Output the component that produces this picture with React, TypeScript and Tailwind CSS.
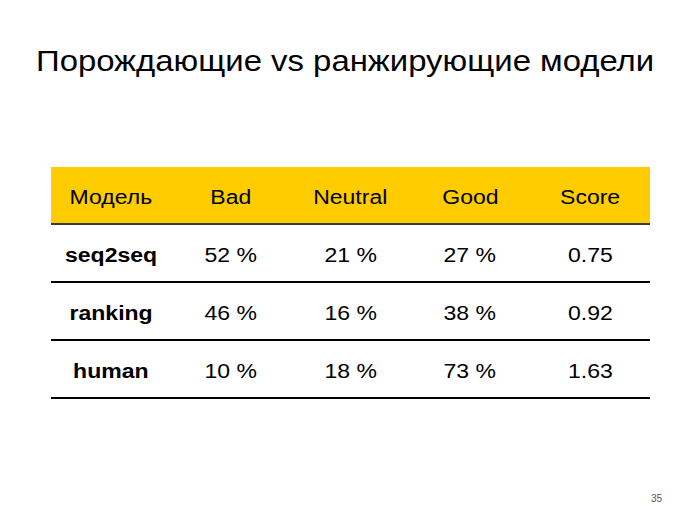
import React from 'react';

const headers = ['Модель', 'Bad', 'Neutral', 'Good', 'Score'];

const rows = [
  ['seq2seq', '52 %', '21 %', '27 %', '0.75'],
  ['ranking', '46 %', '16 %', '38 %', '0.92'],
  ['human', '10 %', '18 %', '73 %', '1.63'],
];

const App: React.FC = () => {
  return (
    <div className="relative w-[700px] h-[525px] bg-white text-black font-['Liberation_Sans',Arial,sans-serif] overflow-hidden">
      <h1 className="pt-[41px] pl-[36px] text-[30px] leading-[40px]">
        <span className="inline-block origin-left scale-x-[1.096]">Порождающие vs ранжирующие модели</span>
      </h1>

      <div className="mt-[86px] ml-[51px] w-[599px]">
        <div className="grid grid-cols-5 h-[58px] pt-[3px] bg-[#ffcc00] border-b-2 border-[#3a3a3a] items-center text-[20px]">
          {headers.map((h) => (
            <div key={h} className="text-center">
              <span className="inline-block scale-x-[1.15]">{h}</span>
            </div>
          ))}
        </div>
        {rows.map((r) => (
          <div key={r[0]} className="grid grid-cols-5 h-[58px] pt-[3px] border-b-2 border-black items-center text-[20px]">
            {r.map((c, i) => (
              <div key={i} className={`text-center ${i === 0 ? 'font-bold' : ''}`}>
                <span className="inline-block scale-x-[1.15]">{c}</span>
              </div>
            ))}
          </div>
        ))}
      </div>

      <div className="absolute left-[651px] top-[491px] text-[10px] text-[#555]">35</div>
    </div>
  );
};

export default App;
